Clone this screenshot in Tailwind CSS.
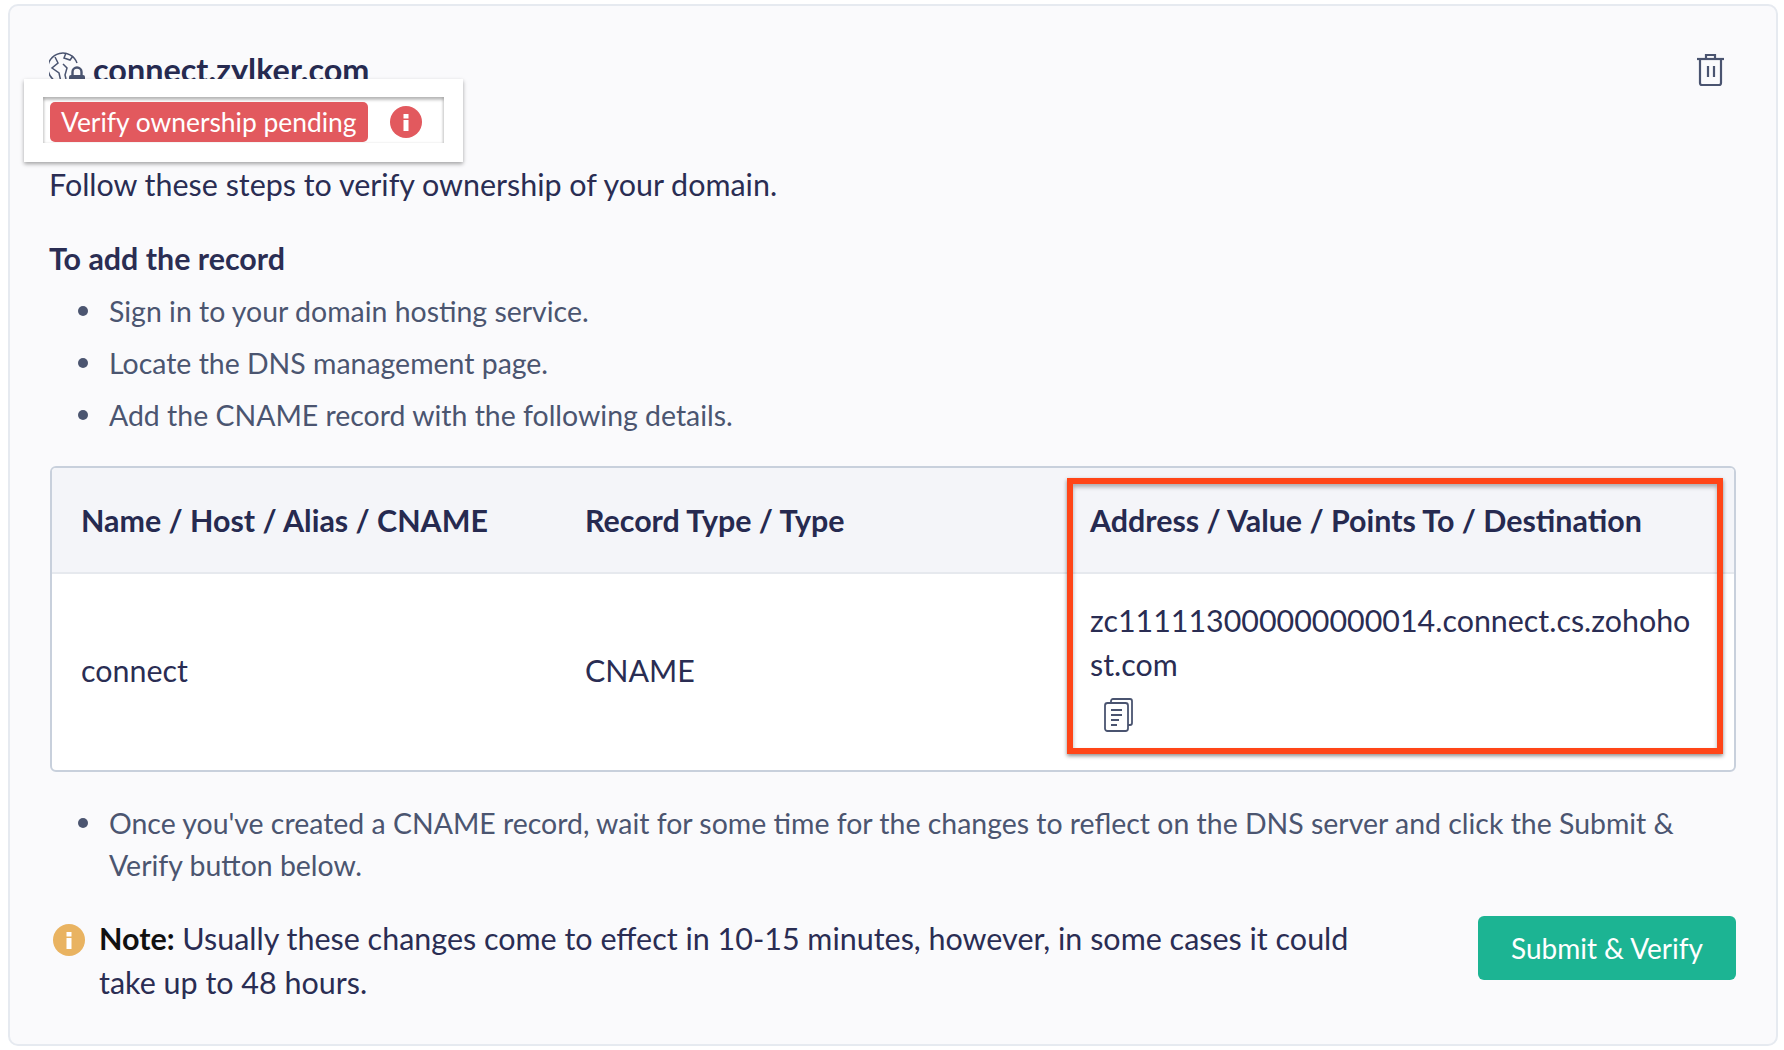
<!DOCTYPE html>
<html><head><meta charset="utf-8"><script src="https://cdn.jsdelivr.net/npm/@tailwindcss/browser@4"></script></head>
<body class="bg-white font-['Lato',sans-serif] text-[#2a2d53]">
<div class="w-[1784px] h-[1050px] overflow-hidden pt-[4px] pl-[8px]">
<div class="relative w-[1770px] h-[1042px] border-2 border-[#e6eaf0] rounded-[10px] bg-[#fafafc] pt-[47px] pl-[40px]">
  <div class="flex items-center h-[32px] gap-[6px] -ml-[1px]">
    <svg class="w-[38px] h-[38px] mt-[4px] text-[#4a5470]" viewBox="0 0 38 38" fill="none" stroke="currentColor" stroke-width="1.5"><path d="M28 11A15 15 0 1 0 14 31"/><path d="M6 5l3 6-6 5 7 5 2 9"/><path d="M17 1l-2 5 6 2 3-4"/><path d="M14 12l4 4-2 7 1 4"/><path d="M23.500 23v-3a4.500 4.500 0 0 1 9 0v3" stroke-width="2.400"/><rect x="20" y="23" width="16" height="15" rx="2" fill="currentColor" stroke="none"/></svg>
    <div class="mt-[2px] text-[32.4px] font-bold leading-[32px] text-[#262a50]">connect.zylker.com</div>
    <svg class="absolute top-[47px] right-[49px] w-[32px] h-[34px] text-[#4a5470]" viewBox="0 0 32 34" fill="none" stroke="currentColor" stroke-width="2.2"><path d="M2 6h27"/><path d="M11 6V2h9v4"/><path d="M5 6v24a2 2 0 0 0 2 2h17a2 2 0 0 0 2-2V6"/><path d="M13 13v11M19 13v11"/></svg>
  </div>
  <div class="absolute left-[14px] top-[73px] w-[439px] h-[83px] bg-white shadow-[0_2px_4px_rgba(0,0,0,0.35)] pt-[18px] pl-[19px]">
    <div class="w-[401px] h-[46px] shadow-[inset_0_3px_3px_rgba(0,0,0,0.25),inset_2px_0_2px_rgba(0,0,0,0.08),inset_-2px_0_2px_rgba(0,0,0,0.08)] pt-[5px] pl-[7px] flex items-start">
      <div class="h-[40px] w-[318px] bg-[#e2595e] rounded-[5px] text-white text-[26.4px] leading-[40px] pl-[11px] whitespace-nowrap">Verify ownership pending</div>
      <svg class="ml-[22px] mt-[4px] w-[32px] h-[32px]" viewBox="0 0 32 32"><circle cx="16" cy="16" r="16" fill="#e2595e"/><rect x="13.500" y="8" width="5" height="4.500" fill="#fff"/><rect x="13.500" y="14" width="5" height="11" fill="#fff"/></svg>
    </div>
  </div>
  <p class="mt-[79px] -ml-[1px] text-[30.45px] leading-[40px]">Follow these steps to verify ownership of your domain.</p>
  <p class="mt-[34px] -ml-[1px] text-[30.4px] leading-[40px] font-bold">To add the record</p>
  <ul class="mt-[14px] pl-[59px] text-[28.45px] leading-[38px] text-[#4b5570] flex flex-col gap-[14px]">
    <li class="relative before:absolute before:left-[-31px] before:top-[14px] before:w-[10px] before:h-[10px] before:rounded-full before:bg-[#4b5570]">Sign in to your domain hosting service.</li>
    <li class="relative before:absolute before:left-[-31px] before:top-[14px] before:w-[10px] before:h-[10px] before:rounded-full before:bg-[#4b5570]">Locate the DNS management page.</li>
    <li class="relative before:absolute before:left-[-31px] before:top-[14px] before:w-[10px] before:h-[10px] before:rounded-full before:bg-[#4b5570]">Add the CNAME record with the following details.</li>
  </ul>
  <div class="relative mt-[32px] w-[1686px] h-[306px] border-2 border-[#c8d0dc] rounded-[6px] bg-white">
    <div class="grid grid-cols-[504px_505px_1fr] h-[106px] bg-[#f4f5f9] border-b-2 border-[#e6e9ee] rounded-t-[4px] text-[30.4px] font-bold leading-[40px] text-[#262a50]">
      <div class="pl-[29px] pt-[32px]">Name / Host / Alias / CNAME</div>
      <div class="pl-[29px] pt-[32px]">Record Type / Type</div>
      <div class="pl-[29px] pt-[32px]">Address / Value / Points To / Destination</div>
    </div>
    <div class="grid grid-cols-[504px_505px_1fr] items-center h-[196px] text-[30.4px] leading-[44px]">
      <div class="pl-[29px] pb-[5px]">connect</div>
      <div class="pl-[29px] pb-[5px]">CNAME</div>
      <div class="pl-[29px] self-start pt-[24px]">
        <div class="break-all w-[605px]">zc111113000000000014.connect.cs.zohohost.com</div>
        <svg class="ml-[14px] mt-[12px] w-[30px] h-[34px] text-[#4a5470]" viewBox="0 0 30 34" fill="none" stroke="currentColor" stroke-width="1.8"><path d="M7 4V3a2 2 0 0 1 2-2h17a2 2 0 0 1 2 2v22a2 2 0 0 1-2 2h-2"/><rect x="1" y="5" width="23" height="28" rx="2.5" fill="#fff"/><path d="M7 12h11M7 17h11M7 22h8M7 27h6"/></svg>
      </div>
    </div>
  </div>
  <div class="absolute left-[1057px] top-[472px] w-[656px] h-[276px] border-[6px] border-[#ff4517] shadow-[0_2px_4px_rgba(0,0,0,0.45),inset_0_3px_4px_rgba(0,0,0,0.3)]"></div>
  <ul class="mt-[30px] pl-[59px] pr-[50px] text-[28.45px] leading-[42px] text-[#4b5570]">
    <li class="relative before:absolute before:left-[-31px] before:top-[16px] before:w-[10px] before:h-[10px] before:rounded-full before:bg-[#4b5570]">Once you've created a CNAME record, wait for some time for the changes to reflect on the DNS server and click the Submit &amp; Verify button below.</li>
  </ul>
  <div class="mt-[30px] flex items-start w-[1686px] justify-between">
    <div class="flex items-start w-[1310px]">
      <svg class="ml-[3px] mt-[8px] w-[32px] h-[32px] shrink-0" viewBox="0 0 32 32"><circle cx="16" cy="16" r="16" fill="#e9b361"/><rect x="13.500" y="8" width="5" height="4.500" fill="#fff"/><rect x="13.500" y="14" width="5" height="11" fill="#fff"/></svg>
      <p class="ml-[14px] text-[30.48px] leading-[44px]"><b class="text-[#111]">Note:</b> Usually these changes come to effect in 10-15 minutes, however, in some cases it could take up to 48 hours.</p>
    </div>
    <button class="w-[258px] h-[64px] bg-[#1cb493] rounded-[6px] text-white text-[28px]">Submit &amp; Verify</button>
  </div>
</div>
</div>
</body></html>
